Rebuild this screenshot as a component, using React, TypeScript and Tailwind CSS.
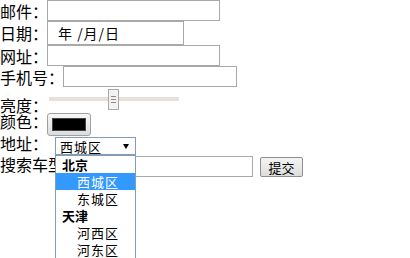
import React from 'react';

const font = "font-['Noto_Sans_CJK_SC','Noto_Sans',sans-serif]";

const TextBox: React.FC<{ width: string }> = ({ width }) => (
  <div className={`${width} h-[21px] border border-[#a9a9a9] bg-white`} />
);

const groups = [
  { name: '北京', items: ['西城区', '东城区'] },
  { name: '天津', items: ['河西区', '河东区'] },
];

export default function App() {
  return (
    <div className={`relative w-[410px] h-[258px] overflow-hidden bg-white text-black ${font}`}>
      {/* 邮件 */}
      <div className="flex items-center h-[21px]">
        <span className="w-[47px] text-[16px] leading-none whitespace-nowrap">邮件：</span>
        <TextBox width="w-[173px]" />
      </div>

      {/* 日期 */}
      <div className="flex items-center h-[24px]">
        <span className="w-[47px] text-[16px] leading-none whitespace-nowrap">日期：</span>
        <div className="w-[137px] h-[24px] border border-[#a9a9a9] flex items-center pl-[10px] text-[14px] leading-none tracking-[1px] whitespace-nowrap">
          年 /月/日
        </div>
      </div>

      {/* 网址 */}
      <div className="flex items-center h-[21px]">
        <span className="w-[47px] text-[16px] leading-none whitespace-nowrap">网址：</span>
        <TextBox width="w-[173px]" />
      </div>

      {/* 手机号 */}
      <div className="flex items-center h-[21px]">
        <span className="w-[63px] text-[16px] leading-none whitespace-nowrap">手机号：</span>
        <TextBox width="w-[174px]" />
      </div>

      {/* 亮度 */}
      <div className="flex items-start h-[25px]">
        <span className="w-[47px] mt-[10px] text-[16px] leading-none whitespace-nowrap">亮度：</span>
        <div className="relative w-[130px] h-[21px] mt-[2px] ml-[2px]">
          <div className="absolute left-0 right-0 top-[8px] h-[4px] bg-[#e6e1da]" />
          <div className="absolute left-[59px] top-0 w-[11px] h-[21px] border border-[#a8a8a8] bg-[#f2f2f2] flex flex-col items-center justify-center gap-[2px]">
            <div className="w-[5px] h-px bg-[#8a8a8a]" />
            <div className="w-[5px] h-px bg-[#8a8a8a]" />
            <div className="w-[5px] h-px bg-[#8a8a8a]" />
          </div>
        </div>
      </div>

      {/* 颜色 */}
      <div className="flex items-start h-[24px]">
        <span className="w-[47px] mt-[1px] text-[16px] leading-none whitespace-nowrap">颜色：</span>
        <div className="mt-[1px] w-[44px] h-[23px] rounded-[3px] border border-[#a0a0a0] bg-gradient-to-b from-[#f7f7f7] to-[#dcdcdc] flex items-center justify-center">
          <div className="w-[34px] h-[13px] bg-black border border-[#444]" />
        </div>
      </div>

      {/* 地址 */}
      <div className="flex items-start h-[19px]">
        <span className="w-[55px] -mt-[1px] text-[16px] leading-none whitespace-nowrap">地址：</span>
        <div className="mt-[1px] w-[81px] h-[18px] border border-[#7f9db9] bg-white flex items-center pl-[4px] pr-[6px] text-[13px] leading-none">
          <span className="flex-1 tracking-[1px]">西城区</span>
          <span className="w-0 h-0 border-l-[3px] border-r-[3px] border-t-[5px] border-l-transparent border-r-transparent border-t-black" />
        </div>
      </div>

      {/* 搜索车型 */}
      <div className="flex items-start h-[22px]">
        <span className="w-[79px] mt-[1px] text-[16px] leading-none whitespace-nowrap">搜索车型：</span>
        <div className="mt-[1px]">
          <TextBox width="w-[174px]" />
        </div>
        <button className="ml-[7px] mt-[2px] w-[43px] h-[20px] rounded-[2px] border border-[#8e8e8e] bg-gradient-to-b from-[#f4f4f4] to-[#dddddd] text-[13px] leading-none">
          提交
        </button>
      </div>

      {/* open select list */}
      <div className="absolute left-[55px] top-[155px] w-[81px] h-[105px] border border-[#7f9db9] bg-white z-10 text-[13px] leading-none">
        {groups.map((g) => (
          <div key={g.name}>
            <div className="h-[17px] flex items-center pl-[6px] font-bold">{g.name}</div>
            {g.items.map((item) => (
              <div
                key={item}
                className={`h-[17px] flex items-center pl-[21px] tracking-[1px] ${
                  item === '西城区' ? 'bg-[#3399ff] text-white' : ''
                }`}
              >
                {item}
              </div>
            ))}
          </div>
        ))}
      </div>
    </div>
  );
}
